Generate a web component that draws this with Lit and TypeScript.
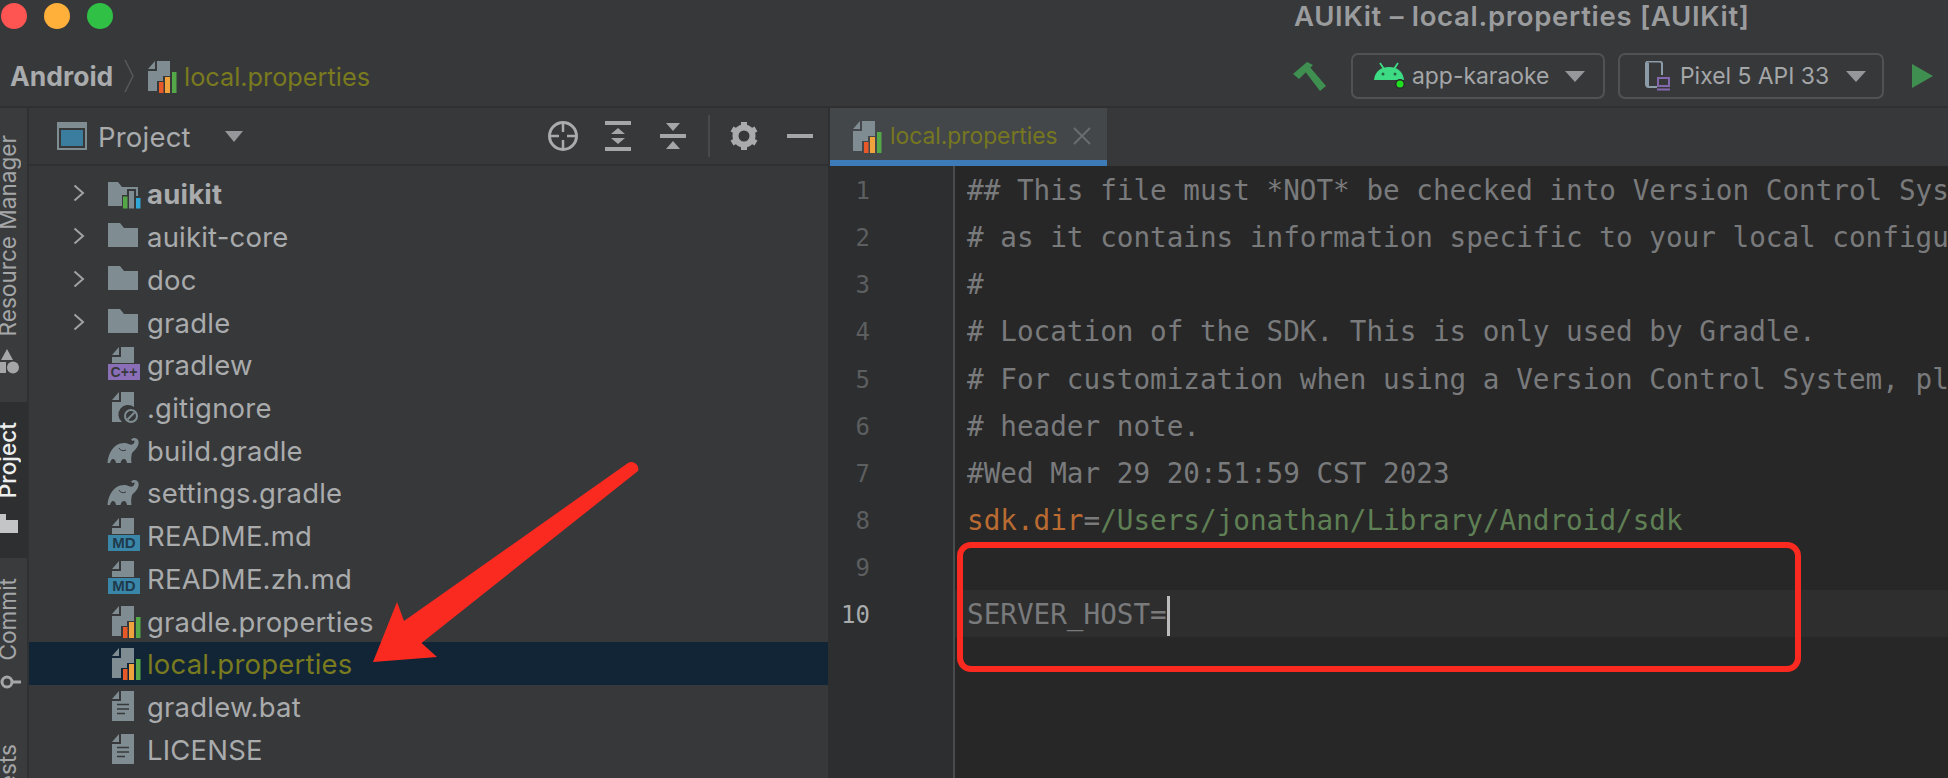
import { LitElement, html, css, svg } from "lit";
import { customElement } from "lit/decorators.js";

const GREY = "#7f8c92";
const fileBody = "M9 0H22V30H0V10H9Z";
const fold = "M0 8L7 0V8Z";

const propsIcon = (cls = "ic") => html`<svg class=${cls} viewBox="0 0 34 34"><g transform="translate(5 2)">
  <path d=${fold} fill=${GREY}/><path d="M9 0H22V15H15V20H9V30H0V10H9Z" fill=${GREY}/>
  <rect x="11" y="21" width="4.5" height="11" fill="#e8592a"/><rect x="17" y="16" width="5" height="16" fill="#f0a33c"/><rect x="24" y="11" width="4.5" height="21" fill="#55a848"/>
</g></svg>`;

const folderIcon = () => html`<svg class="ic" viewBox="0 0 34 34"><path d="M1 4H13L17 9H31V28H1Z" fill=${GREY}/></svg>`;

const moduleIcon = () => html`<svg class="ic" viewBox="0 0 34 34"><path d="M1 6H11L15 11H31V20H29V13H20V19H15V30H1Z" fill=${GREY}/>
  <rect x="16" y="20.5" width="4.500" height="12" fill="#55a848"/><rect x="22" y="15" width="5" height="17.500" fill=${GREY}/><rect x="29" y="22" width="4.500" height="10.500" fill="#2fa8d8"/></svg>`;

const badgeIcon = (label: string, bg: string, ink: string, size: number, bw = 700) => html`<svg class="ic" viewBox="0 0 34 34"><g transform="translate(5 0)"><path d=${fold} fill=${GREY}/><path d="M9 0H22V16H0V10H9Z" fill=${GREY}/></g>
  <rect x="1" y="17" width="32" height="16" fill=${bg}/><text x="17" y="30" text-anchor="middle" class="bt" font-size=${size} font-weight=${bw} fill=${ink}>${label}</text></svg>`;

const ignoreIcon = () => html`<svg class="ic" viewBox="0 0 34 34"><g transform="translate(5 2)"><path d=${fold} fill=${GREY}/><path d="M9 0H22V15A9 9 0 0 0 10 30H0V10H9Z" fill=${GREY}/>
  <circle cx="19" cy="24" r="6" fill="none" stroke=${GREY} stroke-width="2"/><path d="M15.5 27.5L22.5 20.5" stroke=${GREY} stroke-width="2"/></g></svg>`;

const gradleIcon = () => html`<svg class="ic" viewBox="0 0 34 34"><path fill=${GREY} d="M0.5 30C1 22 5 13 13 10.5C17 9.5 20 10 23 11.5C25 12 27 11 27.5 9C28 7.5 26.5 7 25.5 8L24 6.5C26 4 30.5 4.500 31.5 8C32.500 13 28 17 25 20C24 24 24 27 24.500 30H20C19.500 27.500 18.500 26 17 26C15 26 14 28 13.500 30H9C8.500 27.500 7.500 26 6 26C4.500 26 3.500 28 3 30Z"/><path d="M12 15Q14 19 19 17" fill="none" stroke="#37383a" stroke-width="1"/></svg>`;

const textIcon = () => html`<svg class="ic" viewBox="0 0 34 34"><g transform="translate(5 2)"><path d=${fold} fill=${GREY}/><path d=${fileBody} fill=${GREY}/>
  <path d="M5 13.500H17M5 18H17M5 22.500H13" stroke="#37383a" stroke-width="1.600"/></g></svg>`;

type Row = { name: string; icon: any; chev?: boolean; bold?: boolean; sel?: boolean };
const rows: Row[] = [
  { name: "auikit", icon: moduleIcon(), chev: true, bold: true },
  { name: "auikit-core", icon: folderIcon(), chev: true },
  { name: "doc", icon: folderIcon(), chev: true },
  { name: "gradle", icon: folderIcon(), chev: true },
  { name: "gradlew", icon: badgeIcon("C++", "#8a6fb8", "#37383a", 14) },
  { name: ".gitignore", icon: ignoreIcon() },
  { name: "build.gradle", icon: gradleIcon() },
  { name: "settings.gradle", icon: gradleIcon() },
  { name: "README.md", icon: badgeIcon("MD", "#3a86a8", "#1f3a4c", 15) },
  { name: "README.zh.md", icon: badgeIcon("MD", "#3a86a8", "#1f3a4c", 15) },
  { name: "gradle.properties", icon: propsIcon() },
  { name: "local.properties", icon: propsIcon(), sel: true },
  { name: "gradlew.bat", icon: textIcon() },
  { name: "LICENSE", icon: textIcon() },
];

const code = [
  html`## This file must *NOT* be checked into Version Control Systems,`,
  html`# as it contains information specific to your local configuration.`,
  html`#`,
  html`# Location of the SDK. This is only used by Gradle.`,
  html`# For customization when using a Version Control System, please read the`,
  html`# header note.`,
  html`#Wed Mar 29 20:51:59 CST 2023`,
  html`<span class="key">sdk.dir</span>=<span class="val">/Users/jonathan/Library/Android/sdk</span>`,
  html``,
  html`SERVER_HOST=<span class="caret"></span>`,
];

@customElement("app-root")
export class AppRoot extends LitElement {
  static styles = css`
    :host { display: block; width: 1948px; height: 778px; overflow: hidden; position: relative; background: #37383a; font-family: Inter, "Noto Sans", sans-serif; color: #a9abac; }
    svg { display: block; flex: none; }
    .titlebar { height: 108px; box-sizing: border-box; border-bottom: 2px solid #2f3032; display: flex; flex-direction: column; }
    .top { height: 53px; display: flex; padding-top: 3px; box-sizing: border-box; }
    .lights { display: flex; gap: 17px; padding-left: 1px; }
    .light { width: 26px; height: 26px; border-radius: 50%; }
    .r { background: #fe5552; } .o { background: #ffb03b; } .g { background: #30c045; }
    .title { position: absolute; left: 1294px; top: -1px; font-size: 27.500px; line-height: 34px; font-weight: 600; color: #9b9c9e; letter-spacing: 0.7px; white-space: nowrap; }
    .tools { height: 46px; display: flex; align-items: center; padding: 0 15px 0 10px; }
    .android { font-size: 26.500px; font-weight: 700; color: #a9abac; width: 101px; }
    .crumbchev { margin: 0 14px 0 13px; }
    .crumbic { width: 34px; height: 34px; margin-left: -5px; }
    .crumbtext { font-size: 25.300px; color: #7a7a1f; margin-left: 7px; }
    .right { margin-left: auto; display: flex; align-items: center; }
    .combo { height: 46px; box-sizing: border-box; border: 2px solid #505254; border-radius: 7px; display: flex; align-items: center; font-size: 22.900px; color: #a4a6a8; position: relative; }
    .c1 { width: 254px; margin-left: 25px; padding-left: 21px; gap: 7px; }
    .c2 { width: 266px; margin-left: 13px; padding-left: 25px; gap: 7px; }
    .tri { width: 0; height: 0; border-left: 10px solid transparent; border-right: 10px solid transparent; border-top: 11px solid #95979a; }
    .c1 .tri { margin-left: 9px; } .c2 .tri { margin-left: 10px; }
    .play { margin-left: 28px; width: 0; height: 0; border-top: 12.500px solid transparent; border-bottom: 12.500px solid transparent; border-left: 21px solid #3f8f50; }
    .main { display: flex; height: 670px; }
    .strip { width: 27px; flex: none; background: #3a3b3d; border-right: 2px solid #2f3032; display: flex; flex-direction: column; overflow: hidden; }
    .vt { writing-mode: vertical-rl; transform: rotate(180deg); font-size: 22.600px; line-height: 27px; flex: none; white-space: nowrap; margin-left: -6px; color: #a4a6a8; align-self: flex-start; }
    .vt1 { margin-top: 27px; }
    .sicon { margin-top: 12px; }
    .ptab { margin-top: 28px; background: #2e2f31; height: 156px; flex: none; display: flex; flex-direction: column; }
    .vt2 { margin-top: 20px; color: #eceded; font-weight: 500; }
    .vt3 { margin-top: 20px; }
    .vt4 { margin-top: 54px; }
    .project { width: 799px; flex: none; }
    .phead { height: 58px; box-sizing: border-box; border-bottom: 2px solid #2f3032; display: flex; align-items: center; padding-left: 28px; }
    .ptitle { font-size: 27.500px; letter-spacing: 0.2px; color: #a9abac; margin-left: 11px; width: 92px; position: relative; top: 1px; }
    .phead .tri { margin-left: 35px; border-left-width: 9px; border-right-width: 9px; border-top-width: 11px; }
    .pactions { margin-left: auto; display: flex; align-items: center; margin-right: 15px; }
    .sep { width: 2px; height: 42px; background: #48494b; margin: 0 20px 0 22px; }
    .tree { padding-top: 6px; }
    .row { height: 42.730px; display: flex; align-items: center; padding-left: 44px; box-sizing: border-box; font-size: 27.500px; letter-spacing: 0.2px; white-space: nowrap; color: #a9abac; }
    .row.sel { background: #112536; color: #7a7a1f; }
    .row.bold { font-weight: 700; }
    .chev { width: 34px; flex: none; }
    .ic { width: 34px; height: 34px; margin-right: 6px; }
    .bt { font-family: "Liberation Sans", sans-serif; }
    .name { position: relative; top: 1px; }
    .sepv { width: 2px; flex: none; background: #2f3032; }
    .edit { flex: 1; display: flex; flex-direction: column; min-width: 0; }
    .tabs { height: 58px; flex: none; display: flex; }
    .tab { width: 277px; box-sizing: border-box; background: #43474a; border-bottom: 6px solid #3d7ab8; display: flex; align-items: center; padding: 3px 0 0 18px; }
    .tab .tabic { width: 34px; height: 34px; }
    .tabtext { font-size: 22.800px; color: #77771f; margin-left: 8px; width: 165px; white-space: nowrap; }
    .x { margin-left: 18px; }
    .body { flex: 1; display: flex; background: #272727; margin-left: -2px; }
    .gutter { width: 127px; flex: none; box-sizing: border-box; background: #2d2e2f; border-right: 2px solid #4a4b4d; font-family: "DejaVu Sans Mono", monospace; font-size: 24px; color: #5c5e60; text-align: right; }
    .gutter div { height: 47.130px; line-height: 50px; padding-right: 83px; }
    .gutter .cur { color: #a9abac; }
    .code { flex: 1; min-width: 0; overflow: hidden; font-family: "DejaVu Sans Mono", monospace; font-size: 27.650px; color: #797a7c; }
    .code div { height: 47.130px; line-height: 50px; padding-left: 12px; white-space: pre; }
    .code .cur { background: #2e2e2e; }
    .key { color: #b96b32; } .val { color: #5f7f55; }
    .caret { display: inline-block; width: 3px; height: 40px; background: #bbbbbb; vertical-align: middle; }
    .over { position: absolute; left: 0; top: 0; pointer-events: none; }
  `;

  render() {
    return html`
      <div class="titlebar">
        <div class="top">
          <div class="lights"><div class="light r"></div><div class="light o"></div><div class="light g"></div></div>
          <div class="title">AUIKit – local.properties [AUIKit]</div>
        </div>
        <div class="tools">
          <span class="android">Android</span>
          <svg class="crumbchev" width="10" height="32" viewBox="0 0 10 32"><path d="M1 0L9 16L1 32" fill="none" stroke="#56585a" stroke-width="1.500"/></svg>
          ${propsIcon("crumbic")}
          <span class="crumbtext">local.properties</span>
          <div class="right">
            <svg width="33" height="30" viewBox="0 0 33 30"><path d="M0 13L14 1L20 4L6 18Z M11 9L16 5L33 25L27 30Z" fill="#3f8f50"/></svg>
            <div class="combo c1">
              <svg width="31" height="29" viewBox="0 0 31 29"><path d="M6 1L10 7M24 1L20 7" stroke="#3ddc84" stroke-width="1.800" fill="none"/><path d="M0 18C1 9 7 5 15 5C23 5 29 9 30 18Z" fill="#3ddc84"/><circle cx="9" cy="12" r="1.500" fill="#2a5f42"/><circle cx="21" cy="12" r="1.500" fill="#2a5f42"/><circle cx="26" cy="22" r="5" fill="#2b2b2b"/><circle cx="26" cy="22" r="3.500" fill="#1fe01f"/></svg>
              <span>app-karaoke</span><span class="tri"></span>
            </div>
            <div class="combo c2">
              <svg width="28" height="30" viewBox="0 0 28 30"><path d="M12 26H3.500A2.500 2.500 0 0 1 1 23.500V2.500A2.500 2.500 0 0 1 3.500 0.500H14.500A2.500 2.500 0 0 1 17 2.500V14" fill="none" stroke="#8b9ba8" stroke-width="2"/><path d="M1 2H4V25H1Z" fill="#8b9ba8"/><rect x="13" y="17" width="11" height="8" fill="none" stroke="#8468ad" stroke-width="2"/><rect x="12" y="27.500" width="13" height="2" fill="#8468ad"/></svg>
              <span>Pixel 5 API 33</span><span class="tri"></span>
            </div>
            <div class="play"></div>
          </div>
        </div>
      </div>
      <div class="main">
        <div class="strip">
          <div class="vt vt1">Resource Manager</div>
          <svg class="sicon" width="20" height="26" viewBox="0 0 20 26"><path d="M1 12L7 1L13 12Z" fill="#a4a6a8"/><rect x="0" y="14" width="6" height="11" fill="#a4a6a8"/><circle cx="13" cy="19.500" r="6" fill="#a4a6a8"/></svg>
          <div class="ptab">
            <div class="vt vt2">Project</div>
            <svg style="margin-top:15px" width="20" height="20" viewBox="0 0 20 20"><path d="M0 0H6V6H18V19H0Z" fill="#c4c5c6"/></svg>
          </div>
          <div class="vt vt3">Commit</div>
          <svg style="margin-top:13px" width="22" height="16" viewBox="0 0 22 16"><circle cx="7" cy="8" r="5" fill="none" stroke="#a4a6a8" stroke-width="3"/><path d="M12 8H21" stroke="#a4a6a8" stroke-width="3"/></svg>
          <div class="vt vt4">Pull Requests</div>
        </div>
        <div class="project">
          <div class="phead">
            <svg width="30" height="28" viewBox="0 0 30 28"><rect x="1" y="1" width="28" height="26" fill="none" stroke="#7f8c92" stroke-width="2"/><rect x="0" y="0" width="30" height="6" fill="#7f8c92"/><rect x="4" y="8" width="22" height="16" fill="#3a7d9e"/></svg>
            <span class="ptitle">Project</span><span class="tri"></span>
            <div class="pactions">
              <svg width="30" height="30" viewBox="0 0 30 30" fill="none" stroke="#a9abac" stroke-width="3"><circle cx="15" cy="15" r="13.500"/><path d="M15 1V11M15 19V29M1 15H11M19 15H29" stroke-width="2.500"/></svg>
              <svg style="margin-left:27px" width="26" height="30" viewBox="0 0 26 30" fill="#a4a6a8"><rect width="26" height="4"/><rect y="26" width="26" height="4"/><path d="M13 7L20 13H6Z M13 23L6 17H20Z"/></svg>
              <svg style="margin-left:29px" width="26" height="30" viewBox="0 0 26 30" fill="#a4a6a8"><rect y="13" width="26" height="4"/><path d="M6 2H20L13 10Z M6 28H20L13 20Z"/></svg>
              <div class="sep"></div>
              <svg width="28" height="30" viewBox="0 0 28 30"><circle cx="14" cy="15" r="8.500" fill="none" stroke="#a9abac" stroke-width="6"/><g stroke="#a9abac" stroke-width="6"><path d="M14 1V6M14 24V29M2 8L6.500 10.500M21.500 19.500L26 22M2 22L6.500 19.500M21.500 10.500L26 8"/></g></svg>
              <svg style="margin-left:29px" width="26" height="4" viewBox="0 0 26 4"><rect width="26" height="4" fill="#a4a6a8"/></svg>
            </div>
          </div>
          <div class="tree">
            ${rows.map(r => html`<div class="row ${r.sel ? "sel" : ""} ${r.bold ? "bold" : ""}">
              <div class="chev">${r.chev ? html`<svg width="12" height="18" viewBox="0 0 12 18"><path d="M1.500 1.500L10 9L1.500 16.500" fill="none" stroke="#a0a2a4" stroke-width="2"/></svg>` : ""}</div>
              ${r.icon}<span class="name">${r.name}</span>
            </div>`)}
          </div>
        </div>
        <div class="sepv"></div>
        <div class="edit">
          <div class="tabs">
            <div class="tab">
              ${propsIcon("tabic")}
              <span class="tabtext">local.properties</span>
              <svg class="x" width="18" height="18" viewBox="0 0 18 18"><path d="M1 1L17 17M17 1L1 17" stroke="#6a6d70" stroke-width="1.800"/></svg>
            </div>
          </div>
          <div class="body">
            <div class="gutter">${code.map((_, i) => html`<div class=${i === 9 ? "cur" : ""}>${i + 1}</div>`)}</div>
            <div class="code">${code.map((c, i) => html`<div class=${i === 9 ? "cur" : ""}>${c}</div>`)}</div>
          </div>
        </div>
      </div>
      <svg class="over" width="1948" height="778" viewBox="0 0 1948 778">
        ${svg`<rect x="960" y="545" width="838" height="124" rx="11" fill="none" stroke="#fb2a20" stroke-width="6"/>
        <path d="M628 463C633 460 640 465 638 471L421.500 643L437 657L373 662L397 602L404 621Z" fill="#fb2a20"/>`}
      </svg>
    `;
  }
}
